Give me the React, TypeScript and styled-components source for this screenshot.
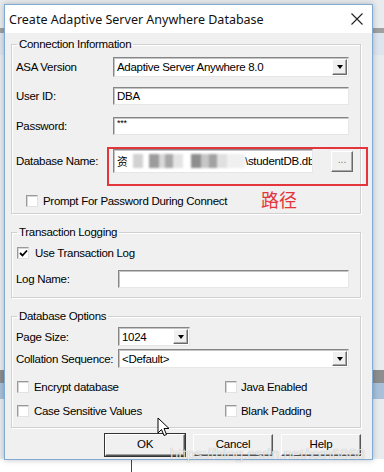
import React from 'react'
import styled, { createGlobalStyle } from 'styled-components'

const GlobalStyle = createGlobalStyle`
  html, body { margin: 0; padding: 0; background: #fff; }
  body { font-family: "Liberation Sans", Arial, sans-serif; }
  * { box-sizing: border-box; }
`

const Desktop = styled.div`
  position: relative;
  width: 384px;
  height: 472px;
  overflow: hidden;
  padding: 4px 0 0 4px;
  background:
    linear-gradient(#444, #444) 131px 459px / 1px 13px no-repeat,
    linear-gradient(#fff, #fff) 0 459px / 100% 13px no-repeat,
    linear-gradient(#a0a0a0, #a0a0a0) 0 28px / 100% 5px no-repeat,
    linear-gradient(#dde5ee, #dde5ee) 0 33px / 100% 22px no-repeat,
    linear-gradient(#8e8e8e, #8e8e8e) 0 370px / 100% 13px no-repeat,
    linear-gradient(#a8c0da, #a8c0da) 0 383px / 100% 16px no-repeat,
    #e9ecef;
`

const Window = styled.div`
  width: 369px;
  height: 456px;
  border: 1px solid #7faad4;
  background: #f0f0f0;
  box-shadow: 0 0 6px rgba(0, 0, 0, 0.25);
  display: flex;
  flex-direction: column;
`

const TitleBar = styled.div`
  height: 28px;
  background: #fff;
  display: flex;
  align-items: center;
  justify-content: space-between;
  padding: 0 9px 0 4px;
  font-family: "Noto Sans", "Open Sans", sans-serif;
  font-size: 12.5px;
  color: #111;
`

const Body = styled.div`
  padding: 4px 11px 0 6px;
  font-size: 11.5px;
  letter-spacing: -0.3px;
  color: #000;
`

const Group = styled.fieldset<{ $mt?: number; $pb: number }>`
  margin: ${p => p.$mt ?? 0}px 0 0 0;
  padding: 0 11px ${p => p.$pb}px 4px;
  border: 1px solid #d0d0d0;
  box-shadow: inset 1px 1px 0 #fff, 1px 1px 0 #fff;
  min-width: 0;
`

const Legend = styled.legend`
  margin-left: 1px;
  padding: 0 2px;
  line-height: 14px;
  font-size: 11.5px;
`

const Row = styled.div<{ $mt: number; $h: number; $pl?: number }>`
  display: flex;
  align-items: center;
  height: ${p => p.$h}px;
  margin-top: ${p => p.$mt}px;
  padding-left: ${p => p.$pl ?? 0}px;
`

const Label = styled.span<{ $w: number }>`
  width: ${p => p.$w}px;
  flex: none;
  white-space: nowrap;
`

const Field = styled.div<{ $w?: number; $top?: boolean }>`
  position: relative;
  height: 100%;
  ${p => (p.$w ? `width: ${p.$w}px; flex: none;` : 'flex: 1;')}
  background: #fff;
  border: 1px solid;
  border-color: #868686 #e6e6e6 #e6e6e6 #868686;
  box-shadow: inset 1px 1px 0 #c4c4c4;
  display: flex;
  align-items: ${p => (p.$top ? 'flex-start' : 'center')};
  font-size: ${p => (p.$top ? '9px' : 'inherit')};
  padding-left: 3px;
  overflow: hidden;
  white-space: nowrap;
`

const DropButton = styled.span`
  position: absolute;
  right: 1px;
  top: 1px;
  bottom: 1px;
  width: 15px;
  background: #f0f0f0;
  border: 1px solid;
  border-color: #fff #6a6a6a #6a6a6a #fff;
  box-shadow: inset -1px -1px 0 #a8a8a8;
  display: flex;
  align-items: center;
  justify-content: center;
`

const Arrow = styled.span`
  width: 0;
  height: 0;
  border-left: 3.5px solid transparent;
  border-right: 3.5px solid transparent;
  border-top: 4px solid #000;
`

const Browse = styled.span`
  flex: none;
  width: 22px;
  height: 21px;
  margin-left: 18px;
  background: #f0f0f0;
  border: 1px solid;
  border-color: #fff #6a6a6a #6a6a6a #fff;
  box-shadow: inset -1px -1px 0 #a8a8a8;
  display: flex;
  align-items: center;
  justify-content: center;
  font-size: 10px;
  color: #777;
  letter-spacing: 0;
  padding-bottom: 3px;
`

const Hanzi = styled.span`
  font-family: "Noto Sans CJK SC", sans-serif;
  font-size: 11px;
  letter-spacing: -1px;
`

const Mosaic = styled.span`
  display: inline-block;
  width: 118px;
  height: 14px;
  flex: none;
  filter: blur(0.8px);
  background: linear-gradient(90deg, #fff 0 6px, #d2d2d2 6px 16px, #fff 16px 22px,
    #9c9c9c 22px 32px, #d8d8d8 32px 38px, #a8a8a8 38px 46px, #e4e4e4 46px 56px,
    #fff 56px 64px, #8e8e8e 64px 74px, #c6c6c6 74px 82px, #a2a2a2 82px 90px,
    #e0e0e0 90px 100px, #f0f0f0 100px 118px);
`

const Caret = styled.span`
  width: 1px;
  height: 15px;
  flex: none;
  background: #000;
  margin-left: 1px;
`

const CheckBox = styled.span`
  width: 12px;
  height: 12px;
  flex: none;
  background: #fff;
  border: 1px solid;
  border-color: #9a9a9a #e2e2e2 #e2e2e2 #9a9a9a;
  box-shadow: inset 1px 1px 0 #d6d6d6;
  display: flex;
  align-items: center;
  justify-content: center;
`

const Check = styled.label<{ $w?: number; $gap: number }>`
  display: flex;
  align-items: center;
  gap: ${p => p.$gap}px;
  ${p => (p.$w ? `width: ${p.$w}px; flex: none;` : '')}
  white-space: nowrap;
`

const Buttons = styled.div`
  display: flex;
  justify-content: flex-end;
  gap: 8px;
  margin-top: 6px;
`

const Button = styled.button<{ $default?: boolean }>`
  width: 80px;
  height: 22px;
  font-family: inherit;
  font-size: 11.5px;
  letter-spacing: -0.2px;
  color: #000;
  background: #f0f0f0;
  border: 1px solid;
  border-color: #fff #555 #555 #fff;
  box-shadow: inset -1px -1px 0 #a0a0a0${p => (p.$default ? ', 0 0 0 1px #333' : '')};
  padding: 0 0 2px;
`

const Annotation = styled.div`
  position: absolute;
  left: 107px;
  top: 147px;
  width: 261px;
  height: 39px;
  border: 2px solid #e3353b;
  pointer-events: none;
`

const Note = styled.div`
  position: absolute;
  left: 261px;
  top: 189px;
  font-family: "Noto Sans CJK SC", sans-serif;
  font-size: 18px;
  line-height: 20px;
  color: #e3353b;
`

const Pointer = styled.svg`
  position: absolute;
  left: 157px;
  top: 417px;
`

const Watermark = styled.div`
  position: absolute;
  left: 170px;
  top: 446px;
  font-family: "Liberation Sans", sans-serif;
  font-size: 15px;
  line-height: 16px;
  color: rgba(255, 255, 255, 0.8);
  text-shadow: 0 0 1px rgba(0, 0, 0, 0.35);
  white-space: nowrap;
`

const Combo: React.FC<{ value: string; w?: number }> = ({ value, w }) => (
  <Field $w={w}>
    {value}
    <DropButton>
      <Arrow />
    </DropButton>
  </Field>
)

const Tick: React.FC<{ on?: boolean }> = ({ on }) => (
  <CheckBox>
    {on && (
      <svg width="9" height="9" viewBox="0 0 9 9">
        <path d="M1 4 L3.5 6.5 L8 1.5" fill="none" stroke="#000" strokeWidth="1.8" />
      </svg>
    )}
  </CheckBox>
)

export default function App() {
  return (
    <>
      <GlobalStyle />
      <Desktop>
        <Window>
          <TitleBar>
            <span>Create Adaptive Server Anywhere Database</span>
            <svg width="12" height="12" viewBox="0 0 12 12">
              <path d="M0.5 0.5 L11.5 11.5 M11.5 0.5 L0.5 11.5" stroke="#222" strokeWidth="1.1" />
            </svg>
          </TitleBar>
          <Body>
            <Group $pb={6}>
              <Legend>Connection Information</Legend>
              <Row $mt={6} $h={20}>
                <Label $w={97}>ASA Version</Label>
                <Combo value="Adaptive Server Anywhere 8.0" />
              </Row>
              <Row $mt={10} $h={18}>
                <Label $w={97}>User ID:</Label>
                <Field>DBA</Field>
              </Row>
              <Row $mt={12} $h={18}>
                <Label $w={97}>Password:</Label>
                <Field $top>***</Field>
              </Row>
              <Row $mt={14} $h={24}>
                <Label $w={97}>Database Name:</Label>
                <Field $w={200}>
                  <Hanzi>资</Hanzi>
                  <Mosaic />\studentDB.db<Caret />
                </Field>
                <Browse>...</Browse>
              </Row>
              <Row $mt={22} $h={12} $pl={10}>
                <Check $gap={5}>
                  <Tick />
                  Prompt For Password During Connect
                </Check>
              </Row>
            </Group>

            <Group $mt={11} $pb={9}>
              <Legend>Transaction Logging</Legend>
              <Row $mt={8} $h={12} $pl={1}>
                <Check $gap={6}>
                  <Tick on />
                  Use Transaction Log
                </Check>
              </Row>
              <Row $mt={11} $h={18}>
                <Label $w={102}>Log Name:</Label>
                <Field />
              </Row>
            </Group>

            <Group $mt={11} $pb={10}>
              <Legend>Database Options</Legend>
              <Row $mt={4} $h={19}>
                <Label $w={102}>Page Size:</Label>
                <Combo value="1024" w={72} />
              </Row>
              <Row $mt={3} $h={19}>
                <Label $w={102}>Collation Sequence:</Label>
                <Combo value="<Default>" />
              </Row>
              <Row $mt={13} $h={12} $pl={1}>
                <Check $w={208} $gap={5}>
                  <Tick />
                  Encrypt database
                </Check>
                <Check $gap={4}>
                  <Tick />
                  Java Enabled
                </Check>
              </Row>
              <Row $mt={12} $h={12} $pl={1}>
                <Check $w={208} $gap={5}>
                  <Tick />
                  Case Sensitive Values
                </Check>
                <Check $gap={4}>
                  <Tick />
                  Blank Padding
                </Check>
              </Row>
            </Group>

            <Buttons>
              <Button $default>OK</Button>
              <Button>Cancel</Button>
              <Button>Help</Button>
            </Buttons>
          </Body>
        </Window>

        <Annotation />
        <Note>路径</Note>
        <Pointer width="13" height="20" viewBox="0 0 13 20">
          <path d="M1 1 L1 16 L4.5 12.5 L7 18.5 L9.5 17.5 L7 11.5 L12 11.5 Z" fill="#fff" stroke="#000" strokeWidth="1" />
        </Pointer>
        <Watermark>https://blog.csdn.net/xxn6868</Watermark>
      </Desktop>
    </>
  )
}
